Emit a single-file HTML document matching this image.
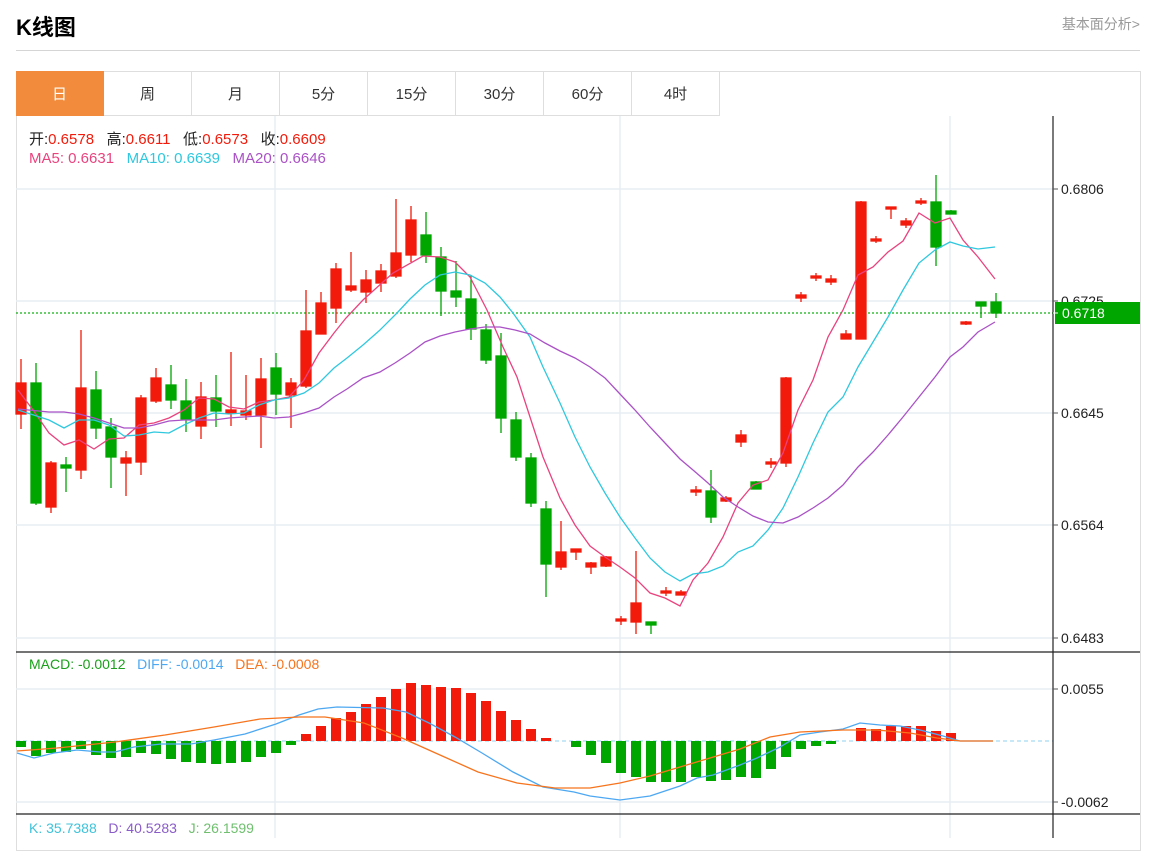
<!DOCTYPE html>
<html><head><meta charset="utf-8"><style>
*{margin:0;padding:0;box-sizing:border-box}
body{width:1167px;height:838px;background:#fff;font-family:"Liberation Sans","Noto Sans CJK SC",sans-serif;position:relative;overflow:hidden}
.title{position:absolute;left:16px;top:10px;font-size:22px;font-weight:bold;color:#000;font-family:"Liberation Sans","Noto Sans CJK SC",sans-serif}
.more{position:absolute;right:27px;top:14px;font-size:14px;color:#999}
.hr{position:absolute;left:16px;top:50px;width:1124px;height:1px;background:#d5d5d5}
.box{position:absolute;left:16px;top:71px;width:1125px;height:780px;border:1px solid #dedede}
.tabs{position:absolute;left:16px;top:71px;height:45px;display:flex}
.tab{width:88px;height:45px;border:1px solid #dedede;border-left:none;font-size:15px;color:#333;display:flex;align-items:center;justify-content:center}
.tab.on{background:#f28c3c;color:#fff;border-color:#f28c3c}
.lg{position:absolute;left:29px;font-size:15px;white-space:pre}
svg{position:absolute;left:0;top:0}
</style></head><body>
<div class="title">K线图</div>
<div class="more">基本面分析&gt;</div>
<div class="hr"></div>
<div class="box"></div>
<div class="tabs"><div class="tab on">日</div><div class="tab">周</div><div class="tab">月</div><div class="tab">5分</div><div class="tab">15分</div><div class="tab">30分</div><div class="tab">60分</div><div class="tab">4时</div></div>
<svg width="1167" height="838" viewBox="0 0 1167 838">
<g stroke="#e6edf3" stroke-width="1.5">
<line x1="16" y1="189" x2="1053" y2="189"/><line x1="16" y1="301" x2="1053" y2="301"/><line x1="16" y1="413" x2="1053" y2="413"/><line x1="16" y1="525" x2="1053" y2="525"/><line x1="16" y1="638" x2="1053" y2="638"/>
<line x1="16" y1="689" x2="1053" y2="689"/><line x1="16" y1="802" x2="1053" y2="802"/>
<line x1="275" y1="116" x2="275" y2="838"/><line x1="620" y1="116" x2="620" y2="838"/><line x1="950" y1="116" x2="950" y2="838"/>
</g>
<line x1="16" y1="741" x2="1053" y2="741" stroke="#8fd0ee" stroke-dasharray="4,3"/>
<line x1="16" y1="313" x2="1053" y2="313" stroke="#11b311" stroke-dasharray="2,2" stroke-width="1.3"/>
<g stroke="#f21a0a" fill="#f21a0a" stroke-width="1.3">
<line x1="21" y1="359" x2="21" y2="429"/><rect x="16" y="383" width="10" height="31"/>
<line x1="51" y1="461" x2="51" y2="513"/><rect x="46" y="463" width="10" height="44"/>
<line x1="81" y1="330" x2="81" y2="479"/><rect x="76" y="388" width="10" height="82"/>
<line x1="126" y1="451" x2="126" y2="496"/><rect x="121" y="458" width="10" height="5"/>
<line x1="141" y1="395" x2="141" y2="475"/><rect x="136" y="398" width="10" height="64"/>
<line x1="156" y1="368" x2="156" y2="403"/><rect x="151" y="378" width="10" height="23"/>
<line x1="201" y1="382" x2="201" y2="439"/><rect x="196" y="397" width="10" height="29"/>
<line x1="231" y1="352" x2="231" y2="426"/><rect x="226" y="410" width="10" height="3"/>
<line x1="246" y1="375" x2="246" y2="420"/><rect x="241" y="411" width="10" height="4"/>
<line x1="261" y1="358" x2="261" y2="448"/><rect x="256" y="379" width="10" height="36"/>
<line x1="291" y1="378" x2="291" y2="428"/><rect x="286" y="383" width="10" height="12"/>
<line x1="306" y1="290" x2="306" y2="388"/><rect x="301" y="331" width="10" height="55"/>
<line x1="321" y1="292" x2="321" y2="334"/><rect x="316" y="303" width="10" height="31"/>
<line x1="336" y1="263" x2="336" y2="323"/><rect x="331" y="269" width="10" height="39"/>
<line x1="351" y1="252" x2="351" y2="292"/><rect x="346" y="286" width="10" height="4"/>
<line x1="366" y1="270" x2="366" y2="303"/><rect x="361" y="280" width="10" height="12"/>
<line x1="381" y1="264" x2="381" y2="292"/><rect x="376" y="271" width="10" height="12"/>
<line x1="396" y1="199" x2="396" y2="278"/><rect x="391" y="253" width="10" height="23"/>
<line x1="411" y1="206" x2="411" y2="262"/><rect x="406" y="220" width="10" height="35"/>
<line x1="561" y1="521" x2="561" y2="570"/><rect x="556" y="552" width="10" height="15"/>
<line x1="576" y1="549" x2="576" y2="560"/><rect x="571" y="549" width="10" height="3"/>
<line x1="591" y1="562" x2="591" y2="574"/><rect x="586" y="563" width="10" height="4"/>
<line x1="606" y1="556" x2="606" y2="567"/><rect x="601" y="557" width="10" height="9"/>
<line x1="621" y1="616" x2="621" y2="625"/><rect x="616" y="619" width="10" height="2"/>
<line x1="636" y1="551" x2="636" y2="634"/><rect x="631" y="603" width="10" height="19"/>
<line x1="666" y1="587" x2="666" y2="596"/><rect x="661" y="591" width="10" height="2"/>
<line x1="681" y1="590" x2="681" y2="595"/><rect x="676" y="592" width="10" height="3"/>
<line x1="696" y1="486" x2="696" y2="496"/><rect x="691" y="490" width="10" height="2"/>
<line x1="726" y1="496" x2="726" y2="502"/><rect x="721" y="498" width="10" height="3"/>
<line x1="741" y1="430" x2="741" y2="447"/><rect x="736" y="435" width="10" height="7"/>
<line x1="771" y1="458" x2="771" y2="468"/><rect x="766" y="462" width="10" height="2"/>
<line x1="786" y1="377" x2="786" y2="467"/><rect x="781" y="378" width="10" height="85"/>
<line x1="801" y1="292" x2="801" y2="302"/><rect x="796" y="295" width="10" height="3"/>
<line x1="816" y1="273" x2="816" y2="281"/><rect x="811" y="276" width="10" height="2"/>
<line x1="831" y1="275" x2="831" y2="285"/><rect x="826" y="279" width="10" height="3"/>
<line x1="846" y1="330" x2="846" y2="339"/><rect x="841" y="334" width="10" height="5"/>
<line x1="861" y1="201" x2="861" y2="339"/><rect x="856" y="202" width="10" height="137"/>
<line x1="876" y1="236" x2="876" y2="243"/><rect x="871" y="239" width="10" height="2"/>
<line x1="891" y1="207" x2="891" y2="219"/><rect x="886" y="207" width="10" height="2"/>
<line x1="906" y1="218" x2="906" y2="228"/><rect x="901" y="221" width="10" height="4"/>
<line x1="921" y1="198" x2="921" y2="205"/><rect x="916" y="201" width="10" height="2"/>
<line x1="966" y1="321" x2="966" y2="325"/><rect x="961" y="322" width="10" height="2"/>
</g>
<g stroke="#00a600" fill="#00a600" stroke-width="1.3">
<line x1="36" y1="363" x2="36" y2="505"/><rect x="31" y="383" width="10" height="120"/>
<line x1="66" y1="457" x2="66" y2="492"/><rect x="61" y="465" width="10" height="3"/>
<line x1="96" y1="371" x2="96" y2="439"/><rect x="91" y="390" width="10" height="38"/>
<line x1="111" y1="418" x2="111" y2="488"/><rect x="106" y="427" width="10" height="30"/>
<line x1="171" y1="365" x2="171" y2="409"/><rect x="166" y="385" width="10" height="15"/>
<line x1="186" y1="379" x2="186" y2="432"/><rect x="181" y="401" width="10" height="18"/>
<line x1="216" y1="375" x2="216" y2="427"/><rect x="211" y="398" width="10" height="13"/>
<line x1="276" y1="353" x2="276" y2="415"/><rect x="271" y="368" width="10" height="26"/>
<line x1="426" y1="212" x2="426" y2="263"/><rect x="421" y="235" width="10" height="20"/>
<line x1="441" y1="247" x2="441" y2="316"/><rect x="436" y="257" width="10" height="34"/>
<line x1="456" y1="261" x2="456" y2="307"/><rect x="451" y="291" width="10" height="6"/>
<line x1="471" y1="275" x2="471" y2="340"/><rect x="466" y="299" width="10" height="30"/>
<line x1="486" y1="324" x2="486" y2="364"/><rect x="481" y="330" width="10" height="30"/>
<line x1="501" y1="333" x2="501" y2="433"/><rect x="496" y="356" width="10" height="62"/>
<line x1="516" y1="412" x2="516" y2="461"/><rect x="511" y="420" width="10" height="37"/>
<line x1="531" y1="453" x2="531" y2="507"/><rect x="526" y="458" width="10" height="45"/>
<line x1="546" y1="501" x2="546" y2="597"/><rect x="541" y="509" width="10" height="55"/>
<line x1="651" y1="622" x2="651" y2="634"/><rect x="646" y="622" width="10" height="3"/>
<line x1="711" y1="470" x2="711" y2="523"/><rect x="706" y="491" width="10" height="26"/>
<line x1="756" y1="481" x2="756" y2="489"/><rect x="751" y="482" width="10" height="7"/>
<line x1="936" y1="175" x2="936" y2="266"/><rect x="931" y="202" width="10" height="45"/>
<line x1="951" y1="210" x2="951" y2="214"/><rect x="946" y="211" width="10" height="3"/>
<line x1="981" y1="302" x2="981" y2="318"/><rect x="976" y="302" width="10" height="4"/>
<line x1="996" y1="293" x2="996" y2="318"/><rect x="991" y="302" width="10" height="11"/>
</g>
<g fill="none" stroke-width="1.3">
<polyline stroke="#e9437e" points="18,390 33,410 49,433 64,445 79,440 94,449 109,439 124,438 139,425 154,423 169,418 184,410 199,398 214,399 229,407 244,409 259,402 274,400 289,397 304,380 319,353 334,333 346,318 363,300 393,273 423,256 440,257 455,262 470,277 487,310 503,347 517,377 530,417 543,457 560,498 575,525 590,546 605,557 620,567 635,578 650,593 665,598 680,606 693,580 708,563 723,537 738,503 753,485 768,480 783,453 798,410 813,380 828,337 843,310 858,275 873,267 888,252 903,241 919,213 935,223 950,218 963,240 978,257 995,279"/>
<polyline stroke="#2fc8de" points="18,410 49,420 64,428 79,420 94,420 109,425 124,436 139,435 154,432 169,433 184,425 199,418 214,413 229,414 244,413 259,405 274,400 289,398 304,393 319,383 334,368 347,358 363,345 380,330 397,313 410,299 425,285 440,275 455,272 470,275 485,283 500,297 513,313 530,337 543,367 560,403 575,437 590,467 605,493 620,517 635,538 650,558 665,572 680,581 693,574 708,572 723,566 738,552 753,546 768,530 783,508 798,477 813,443 828,412 843,397 858,367 873,342 888,317 903,290 919,263 935,250 950,242 963,246 978,249 995,247"/>
<polyline stroke="#aa52c6" points="18,409 49,412 64,412 79,414 94,418 109,423 124,428 139,428 154,425 169,421 184,420 214,420 229,418 259,416 274,418 289,417 304,413 319,408 334,397 347,389 363,378 380,372 395,363 410,353 425,342 440,336 455,332 470,329 485,327 500,327 515,330 530,334 545,343 560,351 575,358 590,367 605,378 620,394 635,410 650,427 665,443 680,459 693,470 708,483 723,497 738,507 753,516 768,522 783,523 798,517 813,508 828,498 843,485 858,467 873,452 888,435 903,417 919,397 935,377 950,357 963,347 978,332 995,322"/>
</g>
<g fill="#00a600">
<rect x="16" y="741" width="10" height="6"/><rect x="31" y="741" width="10" height="15"/><rect x="46" y="741" width="10" height="12"/><rect x="61" y="741" width="10" height="11"/><rect x="76" y="741" width="10" height="8"/><rect x="91" y="741" width="10" height="14"/><rect x="106" y="741" width="10" height="17"/><rect x="121" y="741" width="10" height="16"/><rect x="136" y="741" width="10" height="12"/><rect x="151" y="741" width="10" height="13"/><rect x="166" y="741" width="10" height="18"/><rect x="181" y="741" width="10" height="21"/><rect x="196" y="741" width="10" height="22"/><rect x="211" y="741" width="10" height="23"/><rect x="226" y="741" width="10" height="22"/><rect x="241" y="741" width="10" height="21"/><rect x="256" y="741" width="10" height="16"/><rect x="271" y="741" width="10" height="12"/><rect x="286" y="741" width="10" height="4"/>
<rect x="571" y="741" width="10" height="6"/><rect x="586" y="741" width="10" height="14"/><rect x="601" y="741" width="10" height="22"/><rect x="616" y="741" width="10" height="32"/><rect x="631" y="741" width="10" height="36"/><rect x="646" y="741" width="10" height="41"/><rect x="661" y="741" width="10" height="41"/><rect x="676" y="741" width="10" height="41"/><rect x="691" y="741" width="10" height="36"/><rect x="706" y="741" width="10" height="40"/><rect x="721" y="741" width="10" height="39"/><rect x="736" y="741" width="10" height="36"/><rect x="751" y="741" width="10" height="37"/><rect x="766" y="741" width="10" height="28"/><rect x="781" y="741" width="10" height="16"/><rect x="796" y="741" width="10" height="8"/><rect x="811" y="741" width="10" height="5"/><rect x="826" y="741" width="10" height="3"/>
</g>
<g fill="#f21a0a">
<rect x="301" y="734" width="10" height="7"/><rect x="316" y="726" width="10" height="15"/><rect x="331" y="718" width="10" height="23"/><rect x="346" y="712" width="10" height="29"/><rect x="361" y="704" width="10" height="37"/><rect x="376" y="697" width="10" height="44"/><rect x="391" y="689" width="10" height="52"/><rect x="406" y="683" width="10" height="58"/><rect x="421" y="685" width="10" height="56"/><rect x="436" y="687" width="10" height="54"/><rect x="451" y="688" width="10" height="53"/><rect x="466" y="693" width="10" height="48"/><rect x="481" y="701" width="10" height="40"/><rect x="496" y="711" width="10" height="30"/><rect x="511" y="720" width="10" height="21"/><rect x="526" y="729" width="10" height="12"/><rect x="541" y="738" width="10" height="3"/>
<rect x="856" y="728" width="10" height="13"/><rect x="871" y="729" width="10" height="12"/><rect x="886" y="726" width="10" height="15"/><rect x="901" y="726" width="10" height="15"/><rect x="916" y="726" width="10" height="15"/><rect x="931" y="731" width="10" height="10"/><rect x="946" y="733" width="10" height="8"/>
</g>
<g fill="none" stroke-width="1.3">
<polyline stroke="#4da8f2" points="17,753 34,758 54,753 77,750 100,752 115,752 134,747 161,744 191,744 214,740 245,734 276,724 299,715 318,709 337,707 383,708 406,712 429,723 455,737 482,753 513,772 543,787 574,792 590,796 620,800 650,796 680,786 697,778 713,775 740,765 757,758 780,747 800,735 820,732 843,729 860,723 880,725 900,726 920,730 943,736 960,741 993,741"/>
<polyline stroke="#f7731c" points="17,751 57,748 115,742 165,735 214,727 260,719 299,717 325,717 364,723 402,738 440,755 478,772 517,783 555,788 590,788 620,783 650,776 680,767 710,758 740,749 770,737 800,732 843,730 877,730 910,733 937,738 960,741 993,741"/>
</g>
<g stroke="#222" stroke-width="1.2">
<line x1="1053" y1="116" x2="1053" y2="838"/>
<line x1="16" y1="652" x2="1140" y2="652"/><line x1="16" y1="814" x2="1140" y2="814"/>
</g>
<g stroke="#555"><line x1="1053" y1="189" x2="1058" y2="189"/><line x1="1053" y1="301" x2="1058" y2="301"/><line x1="1053" y1="413" x2="1058" y2="413"/><line x1="1053" y1="525" x2="1058" y2="525"/><line x1="1053" y1="638" x2="1058" y2="638"/><line x1="1053" y1="689" x2="1058" y2="689"/><line x1="1053" y1="802" x2="1058" y2="802"/></g>
<g font-family="Liberation Sans, sans-serif" font-size="14" fill="#222">
<text x="1061" y="194">0.6806</text><text x="1061" y="306">0.6725</text><text x="1061" y="418">0.6645</text><text x="1061" y="530">0.6564</text><text x="1061" y="643">0.6483</text><text x="1061" y="694">0.0055</text><text x="1061" y="807">-0.0062</text>
</g>
<rect x="1055" y="302" width="85" height="22" fill="#00a600"/>
<line x1="1053" y1="313" x2="1058" y2="313" stroke="#fff"/>
<text x="1062" y="318" font-family="Liberation Sans, sans-serif" font-size="14" fill="#fff">0.6718</text>
</svg>
<div class="lg" style="top:128px"><span style="color:#222">开:</span><span style="color:#f21a0a">0.6578</span>   <span style="color:#222">高:</span><span style="color:#f21a0a">0.6611</span>   <span style="color:#222">低:</span><span style="color:#f21a0a">0.6573</span>   <span style="color:#222">收:</span><span style="color:#f21a0a">0.6609</span></div>
<div class="lg" style="top:150px"><span style="color:#e9437e">MA5: 0.6631</span>   <span style="color:#2fc8de">MA10: 0.6639</span>   <span style="color:#aa52c6">MA20: 0.6646</span></div>
<div class="lg" style="top:656px;font-size:14px"><span style="color:#1aa01a">MACD: -0.0012</span>   <span style="color:#4da8f2">DIFF: -0.0014</span>   <span style="color:#f7731c">DEA: -0.0008</span></div>
<div class="lg" style="top:820px;font-size:14px"><span style="color:#3fc3da">K: 35.7388</span>   <span style="color:#8a5cc8">D: 40.5283</span>   <span style="color:#6fbf6f">J: 26.1599</span></div>
</body></html>
